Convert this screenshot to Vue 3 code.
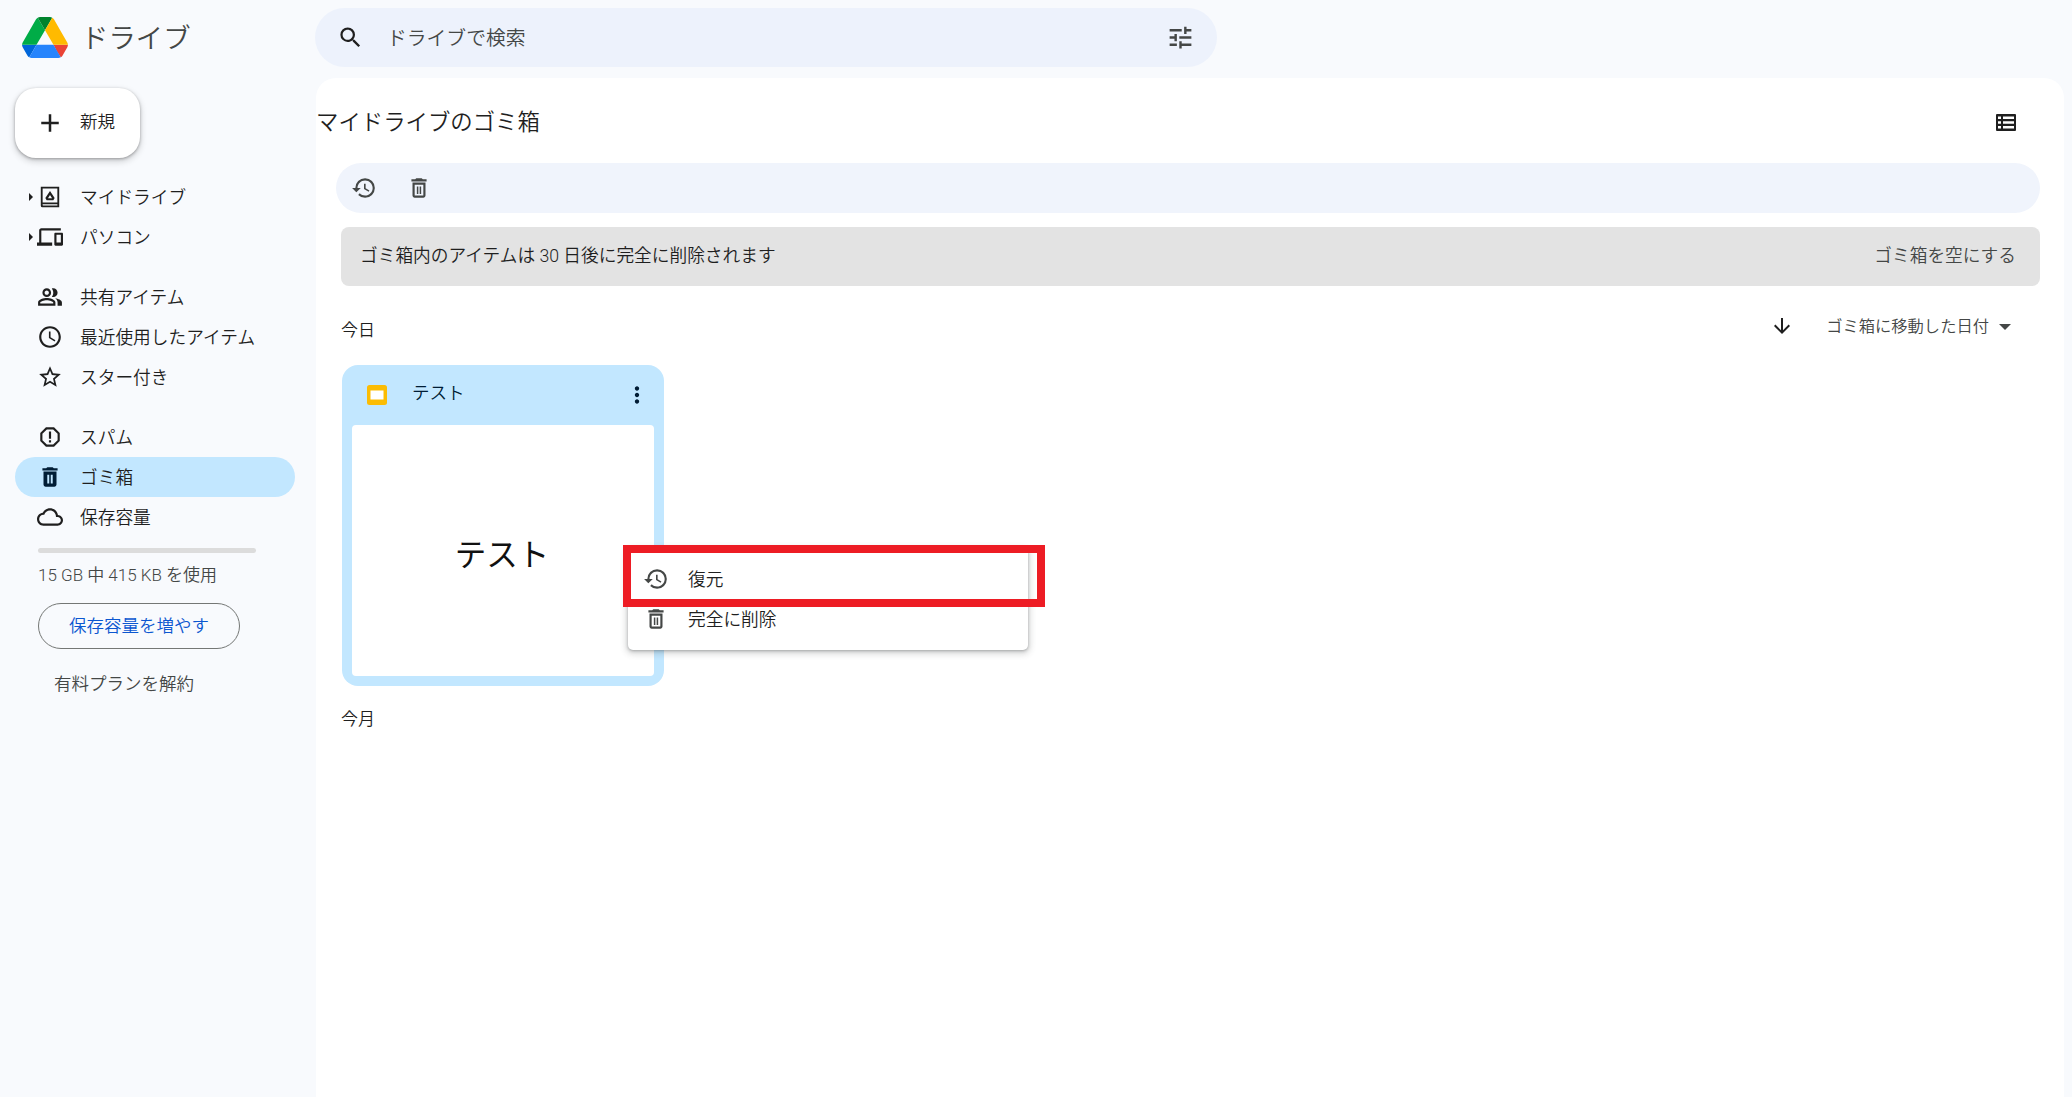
<script setup>
const d = {
  restore: 'M13 3a9 9 0 0 0-9 9H1l3.89 3.89.07.14L9 12H6c0-3.87 3.13-7 7-7s7 3.13 7 7-3.13 7-7 7c-1.93 0-3.68-.79-4.94-2.06l-1.42 1.42A8.954 8.954 0 0 0 13 21a9 9 0 0 0 0-18zm-1 5v5l4.28 2.54.72-1.21-3.5-2.08V8H12z',
  trash: 'M6 19c0 1.1.9 2 2 2h8c1.1 0 2-.9 2-2V7H6v12zM8 9h8v10H8V9zm7.5-5l-1-1h-5l-1 1H5v2h14V4h-3.5zM10 10.5h1.4v7H10zM12.6 10.5H14v7h-1.4z',
  trashFill: 'M15.5 4l-1-1h-5l-1 1H5v2h14V4zM6 7v12c0 1.1.9 2 2 2h8c1.1 0 2-.9 2-2V7zm3.5 3h1.8v8H9.5zm3.2 0h1.8v8h-1.8z',
  people: 'M16.67 13.13C18.04 14.06 19 15.32 19 17v3h4v-3c0-2.18-3.57-3.47-6.33-3.87zM15 12c2.21 0 4-1.79 4-4s-1.79-4-4-4c-.47 0-.91.1-1.33.24C14.5 5.27 15 6.58 15 8s-.5 2.73-1.33 3.76c.42.14.86.24 1.33.24zM9 12c2.21 0 4-1.79 4-4s-1.79-4-4-4-4 1.79-4 4 1.79 4 4 4zm0-6c1.1 0 2 .9 2 2s-.9 2-2 2-2-.9-2-2 .9-2 2-2zM9 13c-2.67 0-8 1.34-8 4v3h16v-3c0-2.66-5.33-4-8-4zm6 5H3v-.99C3.2 16.29 6.3 15 9 15s5.8 1.29 6 2z',
  clock: 'M11.99 2C6.47 2 2 6.48 2 12s4.47 10 9.99 10C17.52 22 22 17.52 22 12S17.52 2 11.99 2zM12 20c-4.42 0-8-3.58-8-8s3.58-8 8-8 8 3.58 8 8-3.58 8-8 8zm.5-13H11v6l5.25 3.15.75-1.23-4.5-2.67z',
  star: 'M22 9.24l-7.19-.62L12 2 9.19 8.63 2 9.24l5.46 4.73L5.82 21 12 17.27 18.18 21l-1.63-7.03L22 9.24zM12 15.4l-3.76 2.27 1-4.28-3.32-2.88 4.38-.38L12 6.1l1.71 4.04 4.38.38-3.32 2.88 1 4.28L12 15.4z',
  spam: 'M15.73 3H8.27L3 8.27v7.46L8.27 21h7.46L21 15.73V8.27L15.73 3zM19 14.9L14.9 19H9.1L5 14.9V9.1L9.1 5h5.8L19 9.1v5.8zM11 7h2v6.5h-2zM11 15h2v2h-2z',
  cloud: 'M19.35 10.04C18.67 6.59 15.64 4 12 4 9.11 4 6.6 5.64 5.35 8.04 2.34 8.36 0 10.91 0 14c0 3.31 2.69 6 6 6h13c2.76 0 5-2.24 5-5 0-2.64-2.05-4.78-4.65-4.96zM19 18H6c-2.21 0-4-1.79-4-4s1.79-4 4-4h.71C7.37 7.69 9.48 6 12 6c3.04 0 5.5 2.46 5.5 5.5v.5H19c1.66 0 3 1.34 3 3s-1.34 3-3 3z',
  devices: 'M4 6h18V4H4c-1.1 0-2 .9-2 2v11H0v3h14v-3H4V6zm19 2h-6c-.55 0-1 .45-1 1v10c0 .55.45 1 1 1h6c.55 0 1-.45 1-1V9c0-.55-.45-1-1-1zm-1 9h-4v-7h4v7z',
  mydrive: 'M3.5 2.5h17v19h-15.500a1.500 1.500 0 0 1-1.500-1.500zM5.200 4.200v12.800h13.600V4.200zM5.200 18.800v.7l.5.3h13.100v-1zM12 6.500l4.300 6.500-1.200 2H8.900l-1.200-2zM12 10.200l-1.900 3h3.800z',
  search: 'M15.5 14h-.79l-.28-.27A6.471 6.471 0 0 0 16 9.5 6.5 6.5 0 1 0 9.5 16c1.61 0 3.09-.59 4.23-1.57l.27.28v.79l5 4.99L20.49 19l-4.99-5zm-6 0C7.01 14 5 11.99 5 9.5S7.01 5 9.5 5 14 7.01 14 9.5 11.99 14 9.5 14z',
  tune: 'M3 17v2h6v-2H3zM3 5v2h10V5H3zm10 16v-2h8v-2h-8v-2h-2v6h2zM7 9v2H3v2h4v2h2V9H7zm14 4v-2H11v2h10zm-6-4h2V7h4V5h-4V3h-2v6z',
  plus: 'M19 13h-6v6h-2v-6H5v-2h6V5h2v6h6v2z',
  arrow: 'M20 12l-1.41-1.41L13 16.17V4h-2v12.17l-5.58-5.59L4 12l8 8 8-8z',
  more: 'M12 8c1.1 0 2-.9 2-2s-.9-2-2-2-2 .9-2 2 .9 2 2 2zm0 2c-1.1 0-2 .9-2 2s.9 2 2 2 2-.9 2-2-.9-2-2-2zm0 6c-1.1 0-2 .9-2 2s.9 2 2 2 2-.9 2-2-.9-2-2-2z',
}
const groups = [
  [
    { label: 'マイドライブ', icon: d.mydrive, caret: true },
    { label: 'パソコン', icon: d.devices, caret: true },
  ],
  [
    { label: '共有アイテム', icon: d.people },
    { label: '最近使用したアイテム', icon: d.clock },
    { label: 'スター付き', icon: d.star },
  ],
  [
    { label: 'スパム', icon: d.spam },
    { label: 'ゴミ箱', icon: d.trashFill, active: true },
    { label: '保存容量', icon: d.cloud },
  ],
]
</script>

<template>
  <div class="app">
    <aside class="side">
      <div class="brand">
        <svg class="logo" viewBox="0 0 87.3 78">
          <path d="m6.6 66.85 3.85 6.65c.8 1.4 1.95 2.5 3.3 3.3l13.75-23.8h-27.5c0 1.55.4 3.1 1.2 4.5z" fill="#0066da"/>
          <path d="m43.65 25-13.75-23.8c-1.35.8-2.5 1.9-3.3 3.3l-25.4 44a9.06 9.06 0 0 0 -1.2 4.5h27.5z" fill="#00ac47"/>
          <path d="m73.55 76.8c1.35-.8 2.5-1.9 3.3-3.3l1.6-2.75 7.65-13.25c.8-1.4 1.2-2.95 1.2-4.5h-27.502l5.852 11.5z" fill="#ea4335"/>
          <path d="m43.65 25 13.75-23.8c-1.35-.8-2.9-1.2-4.5-1.2h-18.5c-1.6 0-3.15.45-4.5 1.2z" fill="#00832d"/>
          <path d="m59.8 53h-32.3l-13.75 23.8c1.35.8 2.9 1.2 4.5 1.2h50.8c1.6 0 3.15-.45 4.5-1.2z" fill="#2684fc"/>
          <path d="m73.4 26.5-12.7-22c-.8-1.4-1.95-2.5-3.3-3.3l-13.75 23.8 16.15 28h27.45c0-1.55-.4-3.1-1.2-4.5z" fill="#ffba00"/>
        </svg>
        <span class="brand-name">ドライブ</span>
      </div>
      <button class="new">
        <svg class="new-icon" viewBox="0 0 24 24"><path :d="d.plus" /></svg>
        <span class="new-label">新規</span>
      </button>
      <nav class="nav">
        <div v-for="(g, i) in groups" :key="i" class="group">
          <div v-for="item in g" :key="item.label" class="item" :class="{ active: item.active }">
            <span v-if="item.caret" class="tri"></span>
            <svg class="icon" viewBox="0 0 24 24"><path fill-rule="evenodd" :d="item.icon" /></svg>
            <span class="label">{{ item.label }}</span>
          </div>
        </div>
      </nav>
      <div class="storage">
        <div class="meter"></div>
        <div class="used">15 GB 中 415 KB を使用</div>
        <button class="more-storage">保存容量を増やす</button>
        <div class="cancel">有料プランを解約</div>
      </div>
    </aside>

    <div class="main">
      <div class="search">
        <svg class="icon search-icon" viewBox="0 0 24 24"><path :d="d.search" /></svg>
        <span class="search-text">ドライブで検索</span>
        <svg class="icon tune" viewBox="0 0 24 24"><path :d="d.tune" /></svg>
      </div>

      <section class="panel">
        <div class="title-row">
          <h1 class="title">マイドライブのゴミ箱</h1>
          <svg class="listview" viewBox="0 0 20 17">
            <rect width="20" height="17" rx="1" fill="#1f1f1f" />
            <path d="M2 2.5h3v2.5H2zM7 2.5h11v2.5H7zM2 7.25h3v2.5H2zM7 7.25h11v2.5H7zM2 12h3v2.5H2zM7 12h11v2.5H7z" fill="#fff" />
          </svg>
        </div>

        <div class="toolbar">
          <svg class="icon tool" viewBox="0 0 24 24"><path :d="d.restore" /></svg>
          <svg class="icon tool" viewBox="0 0 24 24"><path :d="d.trash" /></svg>
        </div>

        <div class="content">
          <div class="banner">
            <span class="banner-text">ゴミ箱内のアイテムは 30 日後に完全に削除されます</span>
            <span class="banner-text empty">ゴミ箱を空にする</span>
          </div>

          <div class="sort-row">
            <span class="section">今日</span>
            <div class="sort">
              <svg class="icon arrow" viewBox="0 0 24 24"><path :d="d.arrow" /></svg>
              <span class="sort-label">ゴミ箱に移動した日付</span>
              <span class="caret"></span>
            </div>
          </div>

          <div class="card">
            <div class="card-head">
              <svg class="slides" viewBox="0 0 20 20">
                <rect width="20" height="20" rx="2.5" fill="#fbbc04" />
                <rect x="3.5" y="5.5" width="13" height="9" fill="#fff" />
              </svg>
              <span class="card-name">テスト</span>
              <svg class="icon kebab" viewBox="0 0 24 24"><path :d="d.more" /></svg>
            </div>
            <div class="preview">テスト</div>
          </div>

          <div class="section month">今月</div>
        </div>

        <div class="menu">
          <div class="menu-item">
            <svg class="icon" viewBox="0 0 24 24"><path :d="d.restore" /></svg>
            <span class="label">復元</span>
          </div>
          <div class="menu-item">
            <svg class="icon" viewBox="0 0 24 24"><path :d="d.trash" /></svg>
            <span class="label">完全に削除</span>
          </div>
        </div>
        <div class="callout"></div>
      </section>
    </div>
  </div>
</template>

<style>
html, body { margin: 0; background: #f8fafd; }
</style>

<style scoped>
.app {
  display: grid;
  grid-template-columns: 316px 1fr;
  width: 2072px;
  height: 1097px;
  overflow: hidden;
  background: #f8fafd;
  color: #1f1f1f;
  font-family: Roboto, "Noto Sans CJK JP", sans-serif;
  font-size: 17.5px;
  font-weight: 350;
}
.icon { width: 26px; height: 26px; fill: #1f1f1f; flex: none; }
.label { margin-bottom: 2px; font-size: 17.7px; }

.side { display: flex; flex-direction: column; padding-left: 15px; }
.brand { height: 74px; display: flex; align-items: center; padding-left: 7px; gap: 13px; }
.logo { width: 46px; height: 41px; }
.brand-name { font-size: 27.4px; color: #444746; margin-bottom: 3px; }
.new {
  width: 125px; height: 70px; margin-top: 14px;
  display: flex; align-items: center; gap: 18px; padding: 0 0 0 23px;
  border: 0; border-radius: 21px; background: #fff;
  box-shadow: 0 1px 3px rgba(0,0,0,.3), 0 3px 6px 1px rgba(0,0,0,.15);
  font: inherit; font-size: 17.5px; color: #1f1f1f;
}
.new-label { margin-bottom: 5px; }
.new-icon { width: 30px; height: 30px; fill: #1f1f1f; margin: 0 -3px; flex: none; }
.nav { margin-top: 19px; display: flex; flex-direction: column; gap: 20px; width: 280px; }
.item {
  position: relative;
  height: 40px; display: flex; align-items: center; gap: 17px;
  padding-left: 22px; border-radius: 20px;
}
.item.active { background: #c2e7ff; }
.item.active .icon { fill: #001d35; }
.tri {
  position: absolute; left: 14px; top: 16px;
  border-left: 4px solid #1f1f1f; border-top: 4px solid transparent; border-bottom: 4px solid transparent;
}
.storage { margin-top: 11px; padding-left: 23px; display: flex; flex-direction: column; align-items: flex-start; }
.meter { width: 218px; height: 5px; border-radius: 3px; background: #dcdcdc; }
.used { margin-top: 8.5px; height: 26px; line-height: 26px; font-size: 17px; color: #444746; }
.more-storage {
  margin-top: 15.5px; width: 202px; height: 46px;
  border: 1px solid #747775; border-radius: 23px; background: transparent;
  color: #0b57d0; font: inherit; font-size: 17.5px; padding: 0 0 3px;
}
.cancel { margin-top: 20.5px; margin-left: 16px; font-size: 17.5px; color: #444746; }

.main { display: flex; flex-direction: column; min-width: 0; padding-right: 8px; }
.search {
  margin: 8px 0 0 -1px; height: 59px; width: 902px; flex: none;
  display: flex; align-items: center;
  background: #edf2fc; border-radius: 30px;
  padding: 0 22px 0 22px; box-sizing: border-box;
}
.search-icon { width: 27px; height: 27px; fill: #1f1f1f; }
.search-text { margin-left: 23px; margin-bottom: 3px; font-size: 19.8px; color: #444746; }
.tune { margin-left: auto; width: 29px; height: 29px; fill: #444746; }
.panel {
  position: relative;
  margin-top: 11px; flex: 1;
  background: #fff; border-radius: 20px 20px 0 0;
  display: flex; flex-direction: column;
}
.title-row { height: 85px; display: flex; align-items: center; justify-content: space-between; padding: 0 48px 0 0; flex: none; }
.title { margin: 0 0 2px; font-size: 22.4px; font-weight: 350; color: #1f1f1f; }
.listview { width: 20px; height: 17px; margin-top: 3px; }
.toolbar {
  margin: 0 24px 0 20px; height: 50px; flex: none;
  display: flex; align-items: center; gap: 29px;
  padding-left: 15px; background: #f0f4fc; border-radius: 25px;
}
.tool { fill: #444746; }
.content { margin: 14px 24px 0 25px; display: flex; flex-direction: column; align-items: stretch; }
.banner {
  height: 59px; background: #e3e3e3; border-radius: 8px;
  display: flex; align-items: center; justify-content: space-between;
  padding: 0 24px 0 19px;
}
.banner-text { font-size: 17.7px; margin-bottom: 5px; }
.empty { color: #444746; }
.sort-row { height: 79px; display: flex; align-items: center; justify-content: space-between; padding-right: 29px; }
.section { font-size: 17px; }
.sort-row .section { margin-top: 6px; }
.sort { display: flex; align-items: center; }
.arrow { width: 24px; height: 24px; }
.sort-label { margin-left: 32px; margin-bottom: 2px; font-size: 16.3px; color: #444746; }
.caret {
  margin-left: 10px; margin-top: 2px;
  border-top: 6px solid #444746; border-left: 6px solid transparent; border-right: 6px solid transparent;
}
.card {
  width: 322px; height: 321px; box-sizing: border-box;
  margin-left: 1px;
  background: #c2e7ff; border-radius: 16px;
  padding: 0 10px 10px;
  display: flex; flex-direction: column;
}
.card-head { height: 60px; display: flex; align-items: center; padding-left: 15px; flex: none; }
.slides { width: 20px; height: 20px; }
.card-name { margin-left: 25px; margin-bottom: 7px; color: #001d35; }
.kebab { margin-left: auto; margin-right: 4px; fill: #001d35; }
.preview {
  flex: 1; background: #fff; border-radius: 4px;
  display: flex; align-items: center; justify-content: center;
  font-size: 31.5px; font-weight: 400; color: #111;
  padding: 2px 2px 0 0;
}
.month { margin-top: 19px; }
.menu {
  position: absolute; left: 312px; top: 470px; width: 400px; height: 102px;
  background: #fff; border-radius: 5px; padding-top: 11px; box-sizing: border-box;
  box-shadow: 0 2px 6px 2px rgba(60,64,67,.2), 0 1px 3px rgba(60,64,67,.35);
}
.menu-item { height: 40px; display: flex; align-items: center; gap: 19px; padding-left: 15px; color: #1f1f1f; }
.menu-item .icon { fill: #444746; }
.callout {
  position: absolute; left: 307px; top: 467px; width: 422px; height: 62px;
  box-sizing: border-box; border: 8px solid #ed1c24;
}
</style>
